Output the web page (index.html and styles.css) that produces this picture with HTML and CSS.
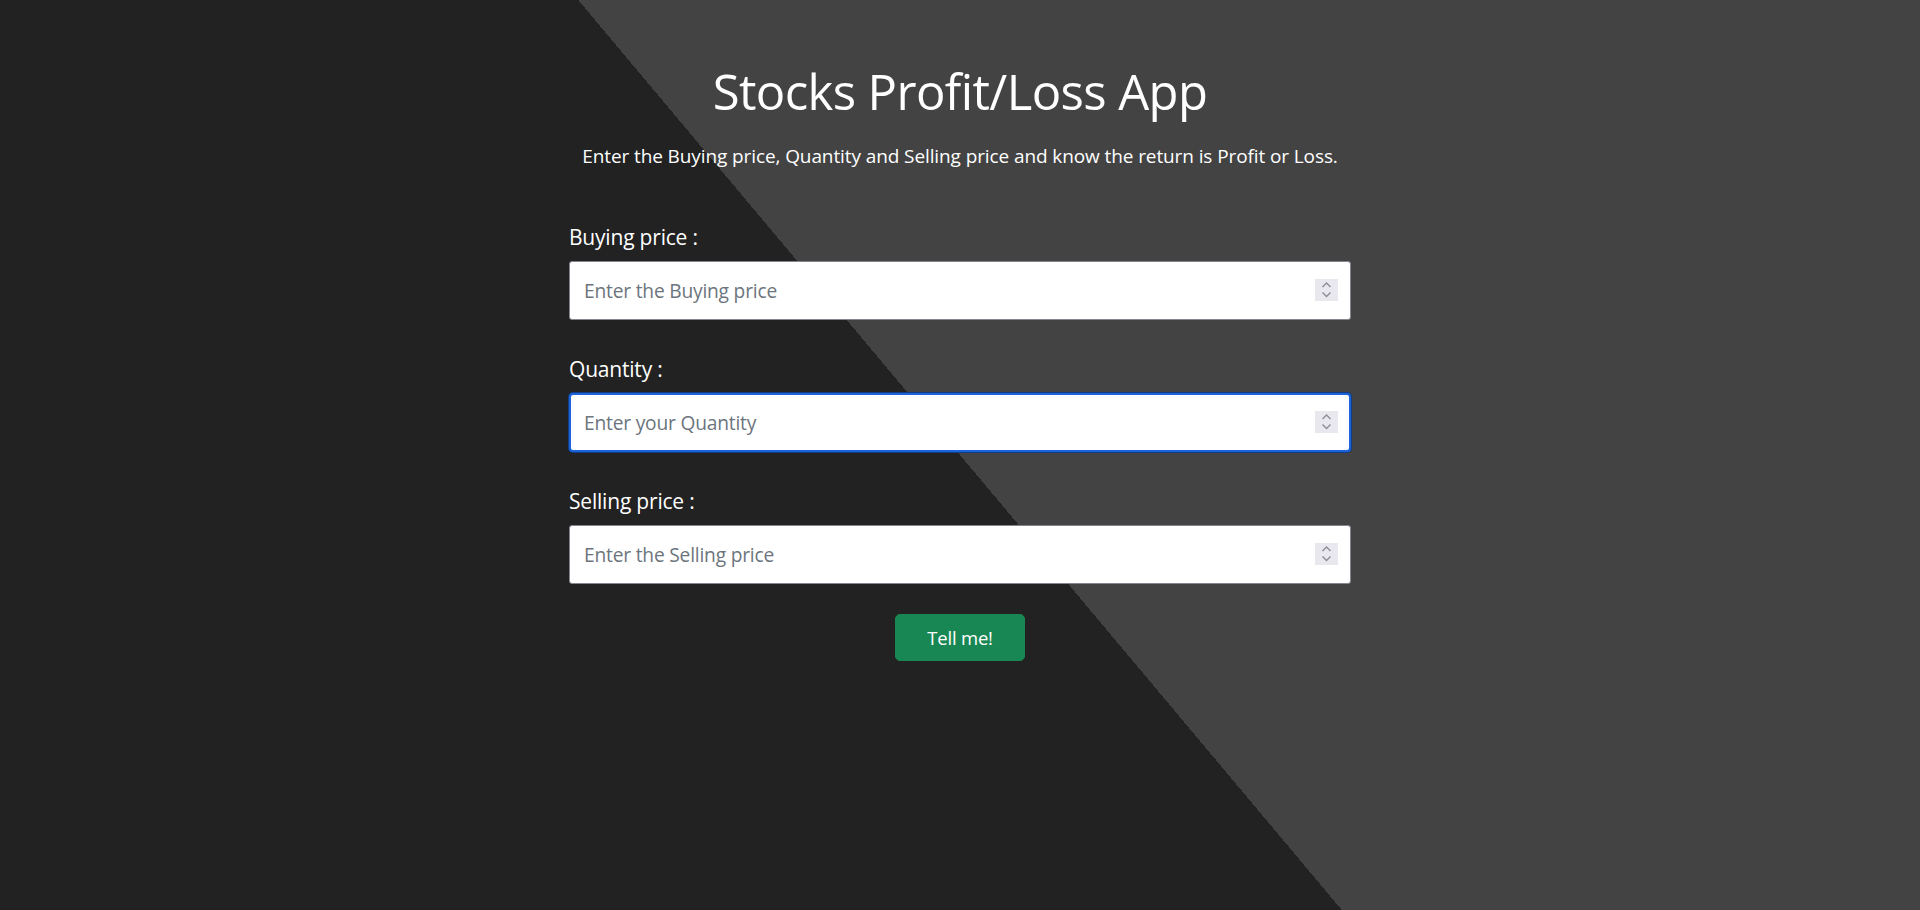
FILE: index.html
```html
<!DOCTYPE html>
<html lang="en">
<head>
<meta charset="utf-8">
<title>Stocks Profit/Loss App</title>
<link rel="stylesheet" href="styles.css">
</head>
<body>
<main class="app">
  <h1 class="title">Stocks Profit/Loss App</h1>
  <p class="lead">Enter the Buying price, Quantity and Selling price and know the return is Profit or Loss.</p>
  <form class="form">
    <div class="fields">
      <div class="field">
        <label class="label" for="buy">Buying price :</label>
        <div class="input-wrap">
          <input class="input" id="buy" type="text" placeholder="Enter the Buying price">
          <span class="spin"><svg width="23" height="22" viewBox="0 0 23 22"><path d="M7.5 8 L11.5 4 L15.5 8 M7.5 13.5 L11.5 17.5 L15.5 13.5" fill="none" stroke="#8d8d99" stroke-width="1.4"/></svg></span>
        </div>
      </div>
      <div class="field">
        <label class="label" for="qty">Quantity :</label>
        <div class="input-wrap">
          <input class="input input-focus" id="qty" type="text" placeholder="Enter your Quantity">
          <span class="spin"><svg width="23" height="22" viewBox="0 0 23 22"><path d="M7.5 8 L11.5 4 L15.5 8 M7.5 13.5 L11.5 17.5 L15.5 13.5" fill="none" stroke="#8d8d99" stroke-width="1.4"/></svg></span>
        </div>
      </div>
      <div class="field">
        <label class="label" for="sell">Selling price :</label>
        <div class="input-wrap">
          <input class="input" id="sell" type="text" placeholder="Enter the Selling price">
          <span class="spin"><svg width="23" height="22" viewBox="0 0 23 22"><path d="M7.5 8 L11.5 4 L15.5 8 M7.5 13.5 L11.5 17.5 L15.5 13.5" fill="none" stroke="#8d8d99" stroke-width="1.4"/></svg></span>
        </div>
      </div>
    </div>
    <div class="actions">
      <button class="btn" type="button">Tell me!</button>
    </div>
  </form>
</main>
</body>
</html>
```
FILE: styles.css
```css
html, body {
  margin: 0;
  padding: 0;
}
body {
  min-height: 100vh;
  background: linear-gradient(50deg, #222222 50%, #434343 50%);
  font-family: "Open Sans", "Liberation Sans", sans-serif;
  color: #ffffff;
}
.app {
  width: 782px;
  margin: 0 auto;
  padding-top: 62px;
}
.title {
  margin: 0;
  text-align: center;
  font-size: 49px;
  font-weight: 400;
  line-height: 1.2;
  letter-spacing: -0.6px;
  color: #ffffff;
}
.lead {
  margin: 21px -40px 0;
  text-align: center;
  font-size: 19px;
  line-height: 28px;
  letter-spacing: -0.1px;
}
.form {
  margin-top: 52px;
}
.fields {
  display: flex;
  flex-direction: column;
  gap: 34px;
}
.field {
  display: flex;
  flex-direction: column;
  gap: 9px;
}
.label {
  font-size: 21px;
  line-height: 30px;
  letter-spacing: -0.2px;
}
.input-wrap {
  position: relative;
}
.input {
  box-sizing: border-box;
  display: block;
  width: 100%;
  height: 59px;
  margin: 0;
  padding: 0 14px;
  border: 1px solid #85858f;
  border-radius: 3px;
  background: #ffffff;
  font-family: "Open Sans", "Liberation Sans", sans-serif;
  font-size: 19.2px;
  letter-spacing: -0.2px;
  color: #212529;
  outline: none;
}
.input::placeholder {
  color: #6c757d;
}
.input-focus {
  border: 2px solid #1c62d8;
  box-shadow: 0 0 0 1px #103d8a;
  border-radius: 4px;
  padding-left: 13px;
}
.spin {
  position: absolute;
  right: 13px;
  top: 18px;
  width: 23px;
  height: 22px;
  background: #e8e8ee;
  display: flex;
}
.actions {
  margin-top: 30px;
  display: flex;
  justify-content: center;
}
.btn {
  box-sizing: border-box;
  width: 130px;
  height: 47px;
  border: 1px solid #198754;
  border-radius: 5px;
  background: #198754;
  color: #ffffff;
  font-family: "Open Sans", "Liberation Sans", sans-serif;
  font-size: 18.5px;
  letter-spacing: -0.2px;
  cursor: pointer;
}
```
